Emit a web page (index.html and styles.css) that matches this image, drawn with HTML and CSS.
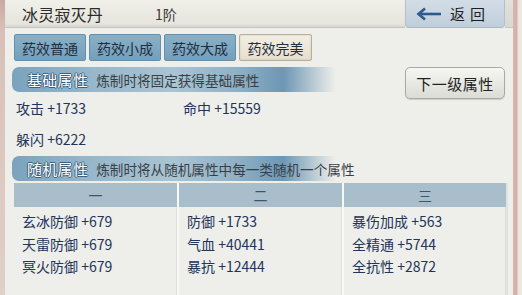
FILE: index.html
```html
<!DOCTYPE html>
<html lang="zh">
<head>
<meta charset="utf-8">
<link rel="stylesheet" href="styles.css">
</head>
<body>
<div class="app">
  <div class="edge-left"></div>
  <div class="main">
    <div class="topbar">
      <div class="titlebar">
        <span class="title">冰灵寂灭丹</span>
        <span class="grade">1阶</span>
      </div>
      <div class="back">
        <svg class="arrow" width="26" height="14" viewBox="0 0 26 14">
          <path d="M25 7 H5" stroke="#2d5b8c" stroke-width="2.6" fill="none"/>
          <path d="M9 1.5 L2.5 7 L9 12.5" stroke="#2d5b8c" stroke-width="2.6" fill="none" stroke-linejoin="miter"/>
        </svg>
        <span class="back-text">返回</span>
      </div>
      <div class="topfill"></div>
    </div>
    <div class="panel">
      <div class="tabs">
        <div class="tab">药效普通</div>
        <div class="tab">药效小成</div>
        <div class="tab">药效大成</div>
        <div class="tab tab-active">药效完美</div>
      </div>
      <div class="basic">
        <div class="basic-left">
          <div class="sec-head">
            <span class="sec-label">基础属性</span>
            <span class="sec-desc">炼制时将固定获得基础属性</span>
          </div>
          <div class="stats">
            <div class="stat">攻击 +1733</div>
            <div class="stat">命中 +15559</div>
            <div class="stat">躲闪 +6222</div>
          </div>
        </div>
        <div class="next-btn">下一级属性</div>
      </div>
      <div class="sec-head sec-random">
        <span class="sec-label">随机属性</span>
        <span class="sec-desc">炼制时将从随机属性中每一类随机一个属性</span>
      </div>
      <div class="table">
        <div class="col">
          <div class="col-head">一</div>
          <div class="col-body">
            <div class="row">玄冰防御 +679</div>
            <div class="row">天雷防御 +679</div>
            <div class="row">冥火防御 +679</div>
          </div>
        </div>
        <div class="col">
          <div class="col-head">二</div>
          <div class="col-body">
            <div class="row">防御 +1733</div>
            <div class="row">气血 +40441</div>
            <div class="row">暴抗 +12444</div>
          </div>
        </div>
        <div class="col">
          <div class="col-head">三</div>
          <div class="col-body">
            <div class="row">暴伤加成 +563</div>
            <div class="row">全精通 +5744</div>
            <div class="row">全抗性 +2872</div>
          </div>
        </div>
      </div>
    </div>
  </div>
  <div class="edge-right"></div>
</div>
</body>
</html>
```

FILE: styles.css
```css
* { box-sizing: border-box; }
html, body { margin: 0; padding: 0; }
body {
  width: 522px;
  height: 295px;
  overflow: hidden;
  background: #ece4de;
  font-family: "Noto Sans CJK SC", "Noto Sans", sans-serif;
  color: #243656;
}
.app {
  display: flex;
  height: 295px;
}
.edge-left {
  width: 5px;
  flex-shrink: 0;
  background: linear-gradient(to bottom, #c9aaa2 0, #d8c0b8 30px, #e0d0c8 100%);
}
.main {
  width: 508px;
  flex-shrink: 0;
  display: flex;
  flex-direction: column;
  background: #eeeeea;
}
.edge-right {
  width: 9px;
  flex-shrink: 0;
  background: linear-gradient(to right, #d9b7ae 0, #d4b0a8 4px, #ede6e0 5px, #efe8e2 100%);
}
.topbar {
  height: 28px;
  display: flex;
  flex-shrink: 0;
}
.titlebar {
  flex: 1;
  display: flex;
  align-items: center;
  padding-left: 17px;
  background: linear-gradient(to bottom, #f0f0ea, #e4e4dc);
  border-bottom: 1px solid #c6c6be;
  box-shadow: inset 0 -2px 2px rgba(0,0,0,0.05);
}
.title {
  font-size: 16px;
  color: #2b2b2b;
  letter-spacing: 0.2px;
}
.grade {
  margin-left: 52px;
  font-size: 14px;
  color: #3a3a3a;
}
.back {
  width: 100px;
  flex-shrink: 0;
  display: flex;
  align-items: center;
  padding-left: 10px;
  background: linear-gradient(to bottom, #d3dde7, #c0cedb);
  border-left: 1px solid #b4c0cc;
  border-right: 1px solid #b4c0cc;
  border-bottom: 1px solid #aab6c2;
  border-radius: 0 0 4px 4px;
}
.arrow { display: block; }
.back-text {
  margin-left: 8px;
  font-size: 15px;
  color: #1e1e1e;
  letter-spacing: 5px;
}
.topfill {
  width: 8px;
  flex-shrink: 0;
  background: linear-gradient(to bottom, #e2e2dc, #d8d8d2);
  border-bottom: 1px solid #c6c6be;
}
.panel {
  flex: 1;
  padding: 6px 0 0 7px;
  display: flex;
  flex-direction: column;
}
.tabs {
  display: flex;
  gap: 3px;
  padding-left: 2px;
}
.tab {
  width: 72px;
  height: 27px;
  display: flex;
  align-items: center;
  justify-content: center;
  font-size: 14px;
  color: #1e2e3e;
  background: linear-gradient(to bottom, #88b0c8, #769fba);
  border: 1px solid #6590ab;
  border-radius: 2px;
}
.tab-active {
  width: 73px;
  background: linear-gradient(to bottom, #f3eee3, #e6dfd0);
  border: 1px solid #b9ae98;
  box-shadow: inset 0 0 2px rgba(120,100,70,0.25);
}
.basic {
  display: flex;
  margin-top: 6px;
}
.basic-left {
  width: 323px;
  flex-shrink: 0;
}
.sec-head {
  height: 25px;
  width: 323px;
  flex-shrink: 0;
  display: flex;
  align-items: center;
  padding-left: 15px;
  white-space: nowrap;
  border-radius: 7px 0 0 7px;
  background: linear-gradient(to right, #7ba3be 0%, #97b7cb 25%, #a9c4d3 50%, #8fb0c6 70%, #6d97b5 84%, rgba(238,238,234,0) 100%);
}
.sec-label {
  flex-shrink: 0;
  font-size: 15px;
  color: #ffffff;
  text-shadow: 1px 0 0 #3d5f7c, -1px 0 0 #3d5f7c, 0 1px 0 #3d5f7c, 0 -1px 0 #3d5f7c;
  letter-spacing: 0.3px;
}
.sec-desc {
  flex-shrink: 0;
  margin-left: 8px;
  font-size: 13.6px;
  color: #3a3f46;
}
.stats {
  display: grid;
  grid-template-columns: 167px 1fr;
  grid-auto-rows: 31px;
  padding-left: 4px;
}
.stat {
  display: flex;
  align-items: center;
  font-size: 14px;
  color: #22345a;
}
.next-btn {
  margin-left: 70px;
  width: 100px;
  height: 32px;
  flex-shrink: 0;
  display: flex;
  align-items: center;
  justify-content: center;
  font-size: 15px;
  color: #222;
  letter-spacing: 0.5px;
  background: linear-gradient(to bottom, #f6f6f2, #dcdcd6);
  border: 1.5px solid #a9a9a5;
  border-radius: 5px;
  box-shadow: 0 1px 1px rgba(0,0,0,0.15);
}
.sec-random {
  margin-top: 2px;
}
.table {
  display: flex;
  margin-top: 2px;
  margin-left: 2px;
  flex: 1;
}
.col {
  width: 165px;
  display: flex;
  flex-direction: column;
  border-right: 2px solid #f8f8f4;
}
.col:last-child {
  width: 164px;
  border-right: 2px solid #e2e2dc;
}
.col-head {
  height: 24px;
  display: flex;
  align-items: center;
  justify-content: center;
  background: #a8becb;
  font-size: 14px;
  color: #3e566c;
}
.col-body {
  flex: 1;
  padding: 3px 0 0 8px;
  box-shadow: inset -1px 0 0 #e0e0da;
}
.row {
  height: 22.5px;
  display: flex;
  align-items: center;
  font-size: 14px;
  color: #22345a;
}
```
